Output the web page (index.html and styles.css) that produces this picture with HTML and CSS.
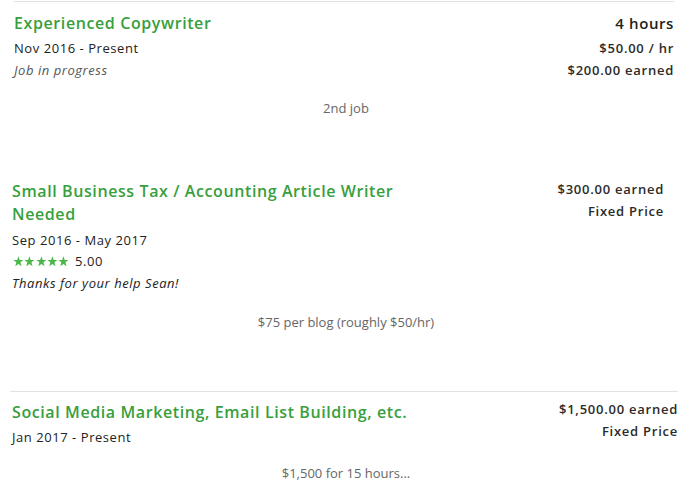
FILE: index.html
```html
<!DOCTYPE html>
<html>
<head>
<meta charset="utf-8">
<link rel="stylesheet" href="styles.css">
</head>
<body>
  <section class="job job-1">
    <div class="col-left">
      <div class="title">Experienced Copywriter</div>
      <div class="row">Nov 2016 - Present</div>
      <div class="row note">Job in progress</div>
    </div>
    <div class="col-right">
      <div class="hours">4 hours</div>
      <div class="row strong">$50.00 / hr</div>
      <div class="row strong">$200.00 earned</div>
    </div>
  </section>
  <p class="caption caption-1">2nd job</p>

  <section class="job job-2">
    <div class="col-left">
      <div class="title title-wrap">Small Business Tax / Accounting Article Writer Needed</div>
      <div class="row">Sep 2016 - May 2017</div>
      <div class="row rating">
        <span class="stars">
          <svg viewBox="0 0 10 10" class="star"><polygon points="5,0.3 6.2,3.6 9.7,3.7 6.9,5.9 7.9,9.4 5,7.3 2.1,9.4 3.1,5.9 0.3,3.7 3.8,3.6"/></svg>
          <svg viewBox="0 0 10 10" class="star"><polygon points="5,0.3 6.2,3.6 9.7,3.7 6.9,5.9 7.9,9.4 5,7.3 2.1,9.4 3.1,5.9 0.3,3.7 3.8,3.6"/></svg>
          <svg viewBox="0 0 10 10" class="star"><polygon points="5,0.3 6.2,3.6 9.7,3.7 6.9,5.9 7.9,9.4 5,7.3 2.1,9.4 3.1,5.9 0.3,3.7 3.8,3.6"/></svg>
          <svg viewBox="0 0 10 10" class="star"><polygon points="5,0.3 6.2,3.6 9.7,3.7 6.9,5.9 7.9,9.4 5,7.3 2.1,9.4 3.1,5.9 0.3,3.7 3.8,3.6"/></svg>
          <svg viewBox="0 0 10 10" class="star"><polygon points="5,0.3 6.2,3.6 9.7,3.7 6.9,5.9 7.9,9.4 5,7.3 2.1,9.4 3.1,5.9 0.3,3.7 3.8,3.6"/></svg>
        </span>
        <span class="score">5.00</span>
      </div>
      <div class="row feedback">Thanks for your help Sean!</div>
    </div>
    <div class="col-right">
      <div class="row strong">$300.00 earned</div>
      <div class="row strong">Fixed Price</div>
    </div>
  </section>
  <p class="caption caption-2">$75 per blog (roughly $50/hr)</p>

  <section class="job job-3">
    <div class="col-left">
      <div class="title">Social Media Marketing, Email List Building, etc.</div>
      <div class="row">Jan 2017 - Present</div>
    </div>
    <div class="col-right">
      <div class="row strong">$1,500.00 earned</div>
      <div class="row strong">Fixed Price</div>
    </div>
  </section>
  <p class="caption caption-3">$1,500 for 15 hours...</p>
</body>
</html>
```

FILE: styles.css
```css
html, body {
  margin: 0;
  padding: 0;
  background: #ffffff;
}

body {
  font-family: "Open Sans", "Liberation Sans", sans-serif;
  color: #222222;
  width: 692px;
  height: 494px;
  overflow: hidden;
}

.job {
  display: flex;
  justify-content: space-between;
  align-items: flex-start;
}

.col-left {
  display: flex;
  flex-direction: column;
}

.col-right {
  display: flex;
  flex-direction: column;
  align-items: flex-end;
}

.title {
  font-size: 16px;
  font-weight: 600;
  color: #37a03c;
  line-height: 22px;
  letter-spacing: 0.6px;
  margin-bottom: 3px;
}

.title-wrap {
  width: 410px;
  line-height: 23px;
  margin-bottom: 3px;
}

.row {
  font-size: 13px;
  font-weight: 500;
  line-height: 22px;
  letter-spacing: 0.55px;
  color: #222222;
  white-space: nowrap;
}

.strong {
  font-weight: 600;
  letter-spacing: 0.75px;
  color: #2b2b2b;
}

.hours {
  font-size: 15px;
  font-weight: 600;
  line-height: 22px;
  letter-spacing: 0.6px;
  margin-bottom: 3px;
  color: #222222;
}

.note {
  font-style: italic;
  color: #555555;
  font-weight: 400;
}

.feedback {
  font-style: italic;
  color: #222222;
  font-weight: 400;
}

.rating {
  display: flex;
  align-items: center;
  gap: 6px;
  line-height: 21px;
  padding-left: 1px;
}

.stars {
  display: flex;
  gap: 0.5px;
}

.star {
  width: 10.8px;
  height: 10.8px;
  fill: #4cb84a;
}

.score {
  font-weight: 500;
}

.caption {
  margin: 0;
  text-align: center;
  font-family: "Open Sans", "Noto Sans", sans-serif;
  font-size: 13px;
  line-height: 18px;
  color: #666666;
}

/* job 1 */
.job-1 {
  margin: 1px 18px 0 14px;
  border-top: 1px solid #e2e2e2;
  padding-top: 10px;
}

.caption-1 {
  margin-top: 18px;
}

/* job 2 */
.job-2 {
  margin: 61px 28px 0 12px;
}

.job-2 .col-left {
  padding-top: 2px;
}

.caption-2 {
  margin-top: 19px;
}

/* job 3 */
.job-3 {
  margin: 60px 14px 0 10px;
  border-top: 1px solid #e2e2e2;
  padding: 6px 0 0 2px;
}

.job-3 .col-left {
  padding-top: 3px;
}

.caption-3 {
  margin-top: 16px;
}
```
